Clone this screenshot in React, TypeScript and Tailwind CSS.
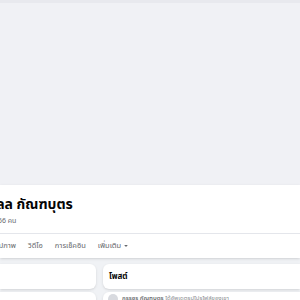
export default function App() {
  const tabs = ["รูปภาพ", "วิดีโอ", "การเช็คอิน"];
  return (
    <div
      className="h-[300px] w-[300px] overflow-hidden bg-[#f0f2f5] text-[#050505]"
      style={{ fontFamily: '"Noto Sans Thai", "Noto Sans", "Liberation Sans", sans-serif' }}
    >
      <div className="h-[3px] bg-[#e8e9ee]" />
      <div className="h-[182px] bg-[#f0f1f5]" />
      <div className="overflow-hidden bg-white shadow-sm">
        <div className="pt-[10px]">
          <div className="-ml-[14px] text-[14px] font-bold leading-[20px] whitespace-nowrap">พลล กัณฑบุตร</div>
          <div className="-ml-[19px] text-[7px] leading-[12px] text-[#65676b] whitespace-nowrap">เพื่อน 56 คน</div>
        </div>
        <div className="mt-[6px] border-t border-[#e4e6eb]" />
        <div className="-ml-[5px] flex h-[24px] items-center gap-[12px] whitespace-nowrap text-[7.5px] text-[#65676b]">
          {tabs.map((t) => (
            <span key={t}>{t}</span>
          ))}
          <span className="flex items-center gap-[2px]">
            เพิ่มเติม
            <svg width="6" height="6" viewBox="0 0 10 10">
              <path d="M2 3.5 L5 6.5 L8 3.5 Z" fill="#65676b" />
            </svg>
          </span>
        </div>
      </div>
      <div className="mt-[6px] flex gap-[7px]">
        <div className="flex w-[96px] flex-col gap-[3px]">
          <div className="h-[25px] rounded-r-md bg-white shadow-sm" />
          <div className="h-[25px] rounded-r-md bg-white shadow-sm" />
        </div>
        <div className="flex flex-1 flex-col gap-[3px]">
          <div className="flex h-[25px] items-center rounded-l-md bg-white pl-[6px] text-[8px] font-bold shadow-sm">
            โพสต์
          </div>
          <div className="flex h-[25px] items-start gap-[4px] rounded-l-md bg-white pl-[5px] pt-[2px] shadow-sm">
            <div className="h-[10px] w-[10px] rounded-full bg-[#d8dadf]" />
            <div className="whitespace-nowrap text-[6px] leading-[10px] text-[#8a8d91]">
              <span className="font-semibold text-[#65676b]">กรรชร กัณฑบุตร</span> ได้อัพเดตรูปโปรไฟล์ของเขา
            </div>
          </div>
        </div>
      </div>
    </div>
  );
}
